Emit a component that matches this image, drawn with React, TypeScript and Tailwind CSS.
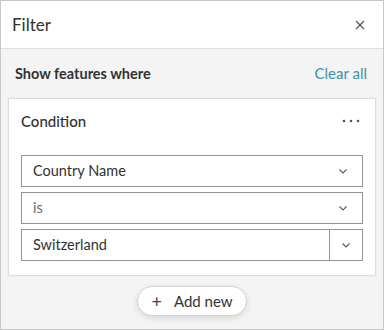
import React from 'react';

const Chevron: React.FC = () => (
  <svg width="12" height="12" viewBox="0 0 12 12" fill="none">
    <path d="M2.5 4.5L6 8L9.5 4.5" stroke="#5a5a5a" strokeWidth="1.1" />
  </svg>
);

const Select: React.FC<{ label: string }> = ({ label }) => (
  <div className="h-[32px] border border-[#959595] bg-white flex items-center justify-between pl-[11px] pr-[13px]">
    <span className="text-[14.5px] text-[#323232]">{label}</span>
    <Chevron />
  </div>
);

export default function App() {
  return (
    <div
      className="w-[384px] h-[330px] border border-[#c8c8c8] flex flex-col text-[#323232]"
      style={{ fontFamily: 'Lato, "Open Sans", sans-serif' }}
    >
      <div className="h-[48px] bg-white border-b border-[#dedede] flex items-center justify-between pl-[11px] pr-[17px]">
        <span className="text-[17px]">Filter</span>
        <svg width="12" height="12" viewBox="0 0 12 12" fill="none">
          <path d="M2 2L10 10M10 2L2 10" stroke="#555" strokeWidth="1.2" />
        </svg>
      </div>

      <div className="flex-1 bg-[#f4f4f4] px-[7px] flex flex-col">
        <div className="h-[49px] flex items-center justify-between pl-[7px] pr-[9px]">
          <span className="text-[14.5px] font-bold">Show features where</span>
          <span className="text-[15px] text-[#3c93a8]">Clear all</span>
        </div>

        <div className="bg-white border border-[#dcdcdc] shadow-[0_0_0_1px_#efefef] px-[12px] pt-[11px] pb-[14px]">
          <div className="h-[22px] flex items-center justify-between">
            <span className="text-[15px] font-medium">Condition</span>
            <svg width="18" height="4" viewBox="0 0 18 4" className="mr-[3px]">
              <circle cx="2" cy="2" r="1.3" fill="#555" />
              <circle cx="9" cy="2" r="1.3" fill="#555" />
              <circle cx="16" cy="2" r="1.3" fill="#555" />
            </svg>
          </div>
          <div className="mt-[23px] flex flex-col gap-[5px]">
            <Select label="Country Name" />
            <div className="h-[32px] border border-[#959595] bg-white flex items-center justify-between pl-[11px] pr-[13px]">
              <span className="text-[14.5px] text-[#6a6a6a]">is</span>
              <Chevron />
            </div>
            <div className="h-[32px] border border-[#959595] bg-white flex items-center">
              <span className="flex-1 pl-[11px] text-[14.5px]">Switzerland</span>
              <div className="w-[33px] h-full border-l border-[#959595] flex items-center justify-center">
                <Chevron />
              </div>
            </div>
          </div>
        </div>

        <div className="flex justify-center mt-[10px]">
          <div className="w-[110px] h-[30px] rounded-full bg-white border border-[#d4d4d4] shadow-[0_2px_6px_rgba(0,0,0,0.12)] flex items-center justify-center gap-[12px]">
            <span className="text-[18px] leading-none text-[#444] -mt-[1px]">+</span>
            <span className="text-[15px]">Add new</span>
          </div>
        </div>
      </div>
    </div>
  );
}
